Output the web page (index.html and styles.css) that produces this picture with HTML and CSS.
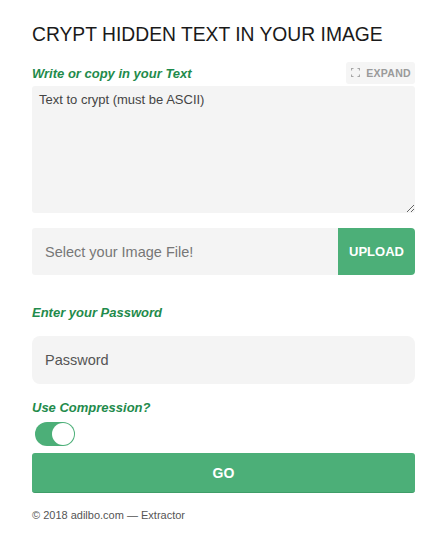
FILE: index.html
```html
<!DOCTYPE html>
<html>
<head>
<meta charset="utf-8">
<link rel="stylesheet" href="styles.css">
</head>
<body>
<div class="page">
  <h1 class="title">CRYPT HIDDEN TEXT IN YOUR IMAGE</h1>
  <div class="label-row">
    <label class="label">Write or copy in your Text</label>
    <button class="expand">
      <svg width="9" height="9" viewBox="0 0 9 9" fill="none" stroke="#a8a8a8" stroke-width="1.2">
        <path d="M0.5 2.5V0.5H2.5M6.5 0.5H8.5V2.5M8.5 6.5V8.5H6.5M2.5 8.5H0.5V6.5"/>
      </svg>
      EXPAND
    </button>
  </div>
  <textarea class="textarea" placeholder="Text to crypt (must be ASCII)"></textarea>
  <div class="upload">
    <div class="file">Select your Image File!</div>
    <button class="upload-btn">UPLOAD</button>
  </div>
  <label class="label pw-label">Enter your Password</label>
  <input class="password" type="password" placeholder="Password">
  <label class="label comp-label">Use Compression?</label>
  <div class="toggle"><span class="knob"></span></div>
  <button class="go">GO</button>
  <p class="footer">© 2018 adilbo.com — Extractor</p>
</div>
</body>
</html>
```
FILE: styles.css
```css
* { box-sizing: border-box; }
body {
  margin: 0;
  background: #fff;
  font-family: "Liberation Sans", Arial, sans-serif;
  color: #222;
}
.page {
  padding: 22px 33px 0 32px;
  display: flex;
  flex-direction: column;
}
.title {
  margin: 0;
  font-size: 19.3px;
  font-weight: normal;
  color: #1a1a1a;
  line-height: 26px;
}
.label-row {
  margin-top: 13px;
  display: flex;
  justify-content: space-between;
  align-items: center;
  height: 24px;
}
.label {
  font-size: 13px;
  font-weight: bold;
  font-style: italic;
  color: #1f8b4c;
}
.expand {
  display: flex;
  align-items: center;
  gap: 6px;
  height: 22px;
  padding: 0 4px 0 5px;
  border: none;
  border-radius: 3px;
  background: #f5f5f5;
  color: #9a9a9a;
  font-family: "Liberation Sans", Arial, sans-serif;
  font-size: 10.5px;
  font-weight: bold;
  letter-spacing: 0.3px;
  margin-top: -1px;
}
.textarea {
  margin-top: 1px;
  width: 100%;
  height: 127px;
  border: none;
  border-radius: 3px;
  background: #f4f4f4;
  padding: 6px 7px;
  font-family: "Liberation Sans", Arial, sans-serif;
  font-size: 13px;
  resize: vertical;
}
.textarea::placeholder { color: #444; }
.upload {
  margin-top: 15px;
  display: flex;
  height: 47px;
}
.file {
  flex: 1;
  background: #f4f4f4;
  border-radius: 3px 0 0 3px;
  display: flex;
  align-items: center;
  padding-left: 13px;
  font-size: 14.5px;
  color: #777;
}
.upload-btn {
  width: 77px;
  border: none;
  border-radius: 0 4px 4px 0;
  background: #4caf78;
  color: #fff;
  font-family: "Liberation Sans", Arial, sans-serif;
  font-weight: bold;
  font-size: 13px;
}
.pw-label { margin-top: 30px; line-height: 16px; }
.password {
  margin-top: 15px;
  height: 48px;
  width: 100%;
  border: none;
  border-radius: 8px;
  background: #f4f4f4;
  padding: 0 13px;
  font-family: "Liberation Sans", Arial, sans-serif;
  font-size: 14.5px;
}
.password::placeholder { color: #555; }
.comp-label { margin-top: 16px; line-height: 16px; }
.toggle {
  margin-top: 6px;
  margin-left: 3px;
  width: 40px;
  height: 24px;
  border-radius: 12px;
  background: #4caf78;
  position: relative;
}
.knob {
  position: absolute;
  right: 1px;
  top: 1px;
  width: 22px;
  height: 22px;
  border-radius: 50%;
  background: #fff;
}
.go {
  margin-top: 7px;
  height: 40px;
  width: 100%;
  border: none;
  border-bottom: 1px solid #3f9d68;
  border-radius: 3px;
  background: #4caf78;
  color: #fff;
  font-family: "Liberation Sans", Arial, sans-serif;
  font-weight: bold;
  font-size: 14px;
}
.footer {
  margin: 16px 0 0;
  font-size: 11px;
  color: #555;
}
```
